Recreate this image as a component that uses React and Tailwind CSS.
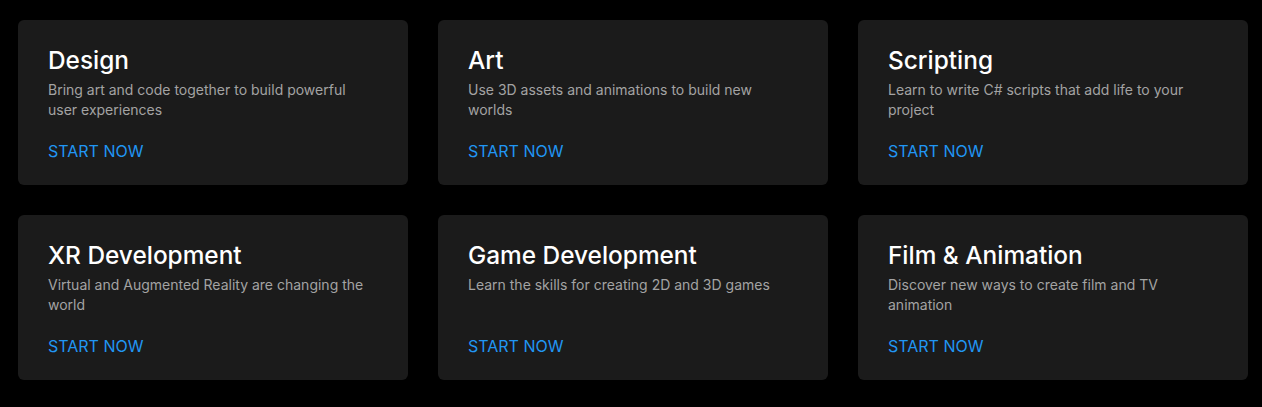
const courses = [
  { title: "Design", text: "Bring art and code together to build powerful user experiences" },
  { title: "Art", text: "Use 3D assets and animations to build new worlds" },
  { title: "Scripting", text: "Learn to write C# scripts that add life to your project" },
  { title: "XR Development", text: "Virtual and Augmented Reality are changing the world" },
  { title: "Game Development", text: "Learn the skills for creating 2D and 3D games" },
  { title: "Film & Animation", text: "Discover new ways to create film and TV animation" },
];

function CourseCard({ title, text }) {
  return (
    <div className="h-[165px] rounded-md bg-[#1b1b1b] px-[30px] pt-[24px]">
      <h2 className="text-[24.4px] leading-[32px] font-medium text-white">{title}</h2>
      <p className="mt-[4px] min-h-[40px] max-w-[322px] text-[14px] leading-[20px] text-[#a3a3a3]">{text}</p>
      <a href="#" className="mt-[20px] block text-[16px] leading-[22px] font-normal text-[#2196f3]">
        START NOW
      </a>
    </div>
  );
}

export default function App() {
  return (
    <div className="min-h-[407px] bg-black px-[18px] pt-[20px] font-['Inter',sans-serif]">
      <div className="grid grid-cols-3 gap-x-[30px] gap-y-[30px] w-[1230px]">
        {courses.map((c) => (
          <CourseCard key={c.title} {...c} />
        ))}
      </div>
    </div>
  );
}
